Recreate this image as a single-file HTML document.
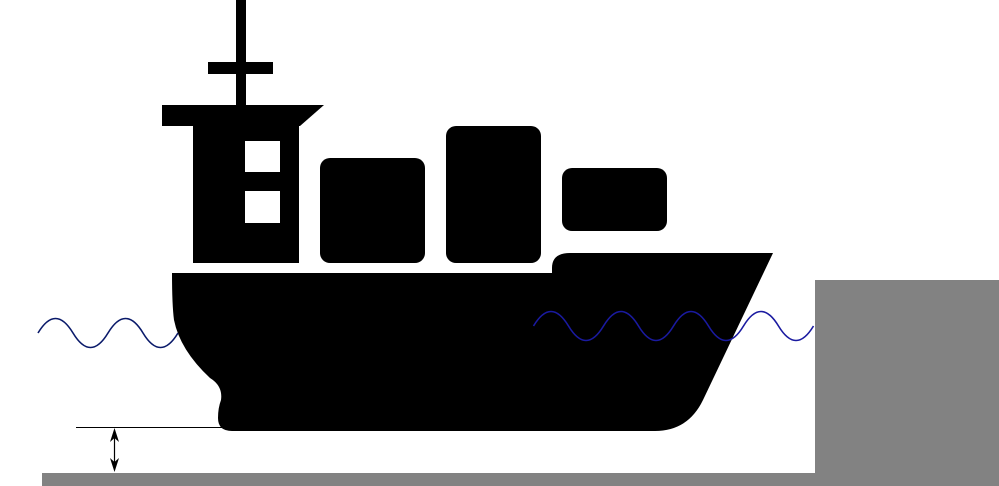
<!DOCTYPE html>
<html><head><style>html,body{margin:0;padding:0;background:#fff;}svg{display:block}</style></head>
<body>
<svg width="999" height="486" viewBox="0 0 999 486" xmlns="http://www.w3.org/2000/svg">
<rect x="0" y="0" width="999" height="486" fill="#fff"/>
<!-- seabed and quay -->
<rect x="42" y="473" width="773" height="13" fill="#828282"/>
<rect x="815" y="280" width="184" height="206" fill="#828282"/>
<!-- mast -->
<rect x="236" y="0" width="10" height="110" fill="#000"/>
<rect x="208" y="62" width="65" height="12" fill="#000"/>
<polygon points="162,105 324,105 300,126 162,126" fill="#000"/>
<rect x="193" y="124" width="106" height="139" fill="#000"/>
<rect x="245" y="141" width="35" height="31" fill="#fff"/>
<rect x="245" y="191" width="35" height="32" fill="#fff"/>
<!-- containers -->
<rect x="320" y="158" width="105" height="105" rx="10" fill="#000"/>
<rect x="446" y="126" width="95" height="137" rx="10" fill="#000"/>
<rect x="562" y="168" width="105" height="63" rx="10" fill="#000"/>
<!-- hull -->
<path d="M172,273 L552,273 L552,268 Q552,253 570,253 L773,253 L703,400 Q688,431 655,431 L232,431 Q218,431 218,418 Q218,408 221,400 Q223,386 210,378 Q180,350 174,320 Q172,305 172,273 Z" fill="#000"/>
<!-- waves -->
<path d="M38,333 Q55.5,304 73,333 T108,333 T143,333 T178,333" fill="none" stroke="#0a1a6a" stroke-width="1.6"/>
<path d="M533.5,326 Q551,297 568.5,326 T603.5,326 T638.5,326 T673.5,326 T708.5,326 T743.5,326 T778.5,326 T813.5,326" fill="none" stroke="#1a1aa0" stroke-width="1.6"/>
<!-- clearance -->
<line x1="76" y1="427.5" x2="222" y2="427.5" stroke="#000" stroke-width="1"/>
<line x1="114.5" y1="432" x2="114.5" y2="468" stroke="#000" stroke-width="1.2"/>
<polygon points="114.5,428 110,442 114.5,438 119,442" fill="#000"/>
<polygon points="114.5,472 110,458 114.5,462 119,458" fill="#000"/>
</svg>
</body></html>
